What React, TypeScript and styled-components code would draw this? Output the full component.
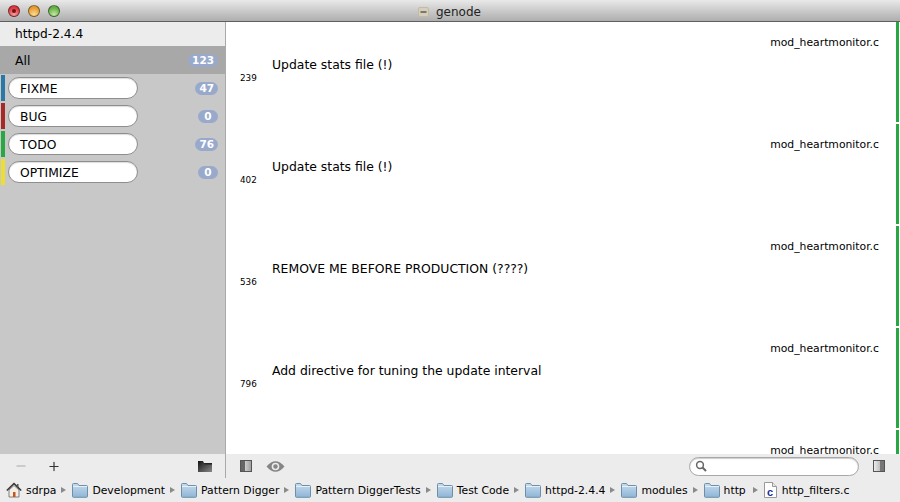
import React from "react";
import styled, { createGlobalStyle } from "styled-components";
import { FiPlus, FiMinus } from "react-icons/fi";

const GlobalStyle = createGlobalStyle`
  html, body {
    margin: 0;
    padding: 0;
    background: #ececec;
  }
  body {
    font-family: "DejaVu Sans", "Liberation Sans", sans-serif;
    color: #000;
  }
`;

const Window = styled.div`
  width: 900px;
  height: 502px;
  display: flex;
  flex-direction: column;
  overflow: hidden;
`;

const TitleBar = styled.div`
  height: 21px;
  flex: none;
  display: flex;
  align-items: center;
  background: linear-gradient(#e9e9e9, #c8c8c8 55%, #aeaeae);
  border-bottom: 1px solid #5f5f5f;
  position: relative;
`;

const Lights = styled.div`
  display: flex;
  gap: 8px;
  padding-left: 8px;
`;

const Light = styled.span<{ $color: string; $glow: string; $dot?: boolean }>`
  width: 12px;
  height: 12px;
  border-radius: 50%;
  box-sizing: border-box;
  border: 1px solid rgba(0, 0, 0, 0.45);
  background: radial-gradient(circle at 50% 85%, ${(p) => p.$glow} 0, ${(p) => p.$color} 70%);
  display: flex;
  align-items: center;
  justify-content: center;
  &::after {
    content: "";
    width: 4px;
    height: 4px;
    border-radius: 50%;
    background: ${(p) => (p.$dot ? "#7a1016" : "transparent")};
  }
`;

const WindowTitle = styled.div`
  position: absolute;
  left: 418px;
  top: 3px;
  display: flex;
  align-items: center;
  gap: 7px;
  font-size: 12px;
  line-height: 18px;
  color: #222;
`;

const Body = styled.div`
  flex: 1;
  display: flex;
  min-height: 0;
`;

const Sidebar = styled.div`
  width: 225px;
  flex: none;
  display: flex;
  flex-direction: column;
  background: #c8c8c8;
  border-right: 1px solid #a9a9a9;
`;

const ProjectName = styled.div`
  height: 24px;
  flex: none;
  background: #ececec;
  padding-left: 15px;
  font-size: 12.2px;
  line-height: 24px;
`;

const AllRow = styled.div`
  height: 28px;
  flex: none;
  display: flex;
  align-items: center;
  justify-content: space-between;
  background: #a8a8a8;
  padding: 0 7px 0 15px;
  font-size: 12.4px;
`;

const TagRow = styled.div`
  height: 28px;
  flex: none;
  display: flex;
  align-items: center;
  padding-right: 7px;
`;

const TagColor = styled.span<{ $color: string }>`
  width: 4px;
  height: 26px;
  margin-left: 1px;
  flex: none;
  background: ${(p) => p.$color};
`;

const TagPill = styled.div`
  width: 130px;
  height: 22px;
  box-sizing: border-box;
  margin-left: 3px;
  padding-left: 11px;
  border: 1px solid #8e8e8e;
  border-radius: 11px;
  background: #fff;
  box-shadow: inset 0 1px 1px #ddd;
  font-size: 12.3px;
  line-height: 22px;
`;

const Count = styled.span`
  margin-left: auto;
  height: 13px;
  min-width: 20px;
  padding: 0 4px;
  box-sizing: border-box;
  border-radius: 7px;
  background: #98a9cc;
  color: #fff;
  font-size: 10.5px;
  font-weight: bold;
  line-height: 13px;
  text-align: center;
`;

const Spacer = styled.div`
  flex: 1;
`;

const SidebarFooter = styled.div`
  height: 24px;
  flex: none;
  display: flex;
  align-items: center;
  background: #ececec;
  padding: 0 13px 0 14px;
`;

const FooterButton = styled.span<{ $muted?: boolean }>`
  width: 14px;
  height: 16px;
  margin-right: 19px;
  display: flex;
  align-items: center;
  justify-content: center;
  color: ${(p) => (p.$muted ? "#aaa" : "#333")};
`;

const Main = styled.div`
  flex: 1;
  min-width: 0;
  display: flex;
  flex-direction: column;
`;

const Entries = styled.div`
  flex: 1;
  min-height: 0;
  overflow: hidden;
  background: #fff;
`;

const Entry = styled.div`
  height: 100px;
  margin-bottom: 2px;
  padding: 14px 17px 0 14px;
  margin-right: 1px;
  border-right: 3px solid #27a843;
  display: grid;
  grid-template-columns: 32px 1fr;
  grid-template-rows: 14px 13px 24px;
  box-sizing: border-box;
`;

const FileName = styled.div`
  grid-column: 1 / 3;
  text-align: right;
  font-size: 10.8px;
  line-height: 14px;
`;

const Message = styled.div`
  grid-column: 2;
  grid-row: 2 / 4;
  padding-top: 6px;
  font-size: 12.4px;
  line-height: 18px;
  white-space: nowrap;
`;

const LineNumber = styled.div`
  grid-column: 1;
  grid-row: 3;
  padding-top: 9px;
  font-size: 8.8px;
  line-height: 12px;
`;

const MainFooter = styled.div`
  height: 24px;
  flex: none;
  display: flex;
  align-items: center;
  background: #ececec;
  padding: 0 15px 0 14px;
  gap: 14px;
`;

const SearchBox = styled.div`
  width: 170px;
  height: 19px;
  margin-left: auto;
  box-sizing: border-box;
  border: 1px solid #a8a8a8;
  border-radius: 10px;
  background: #fff;
  box-shadow: inset 0 1px 1px #ccc;
  display: flex;
  align-items: center;
  padding-left: 5px;
`;

const PathBar = styled.div`
  height: 24px;
  flex: none;
  display: flex;
  align-items: center;
  background: #ececec;
  padding-left: 6px;
  font-size: 10.8px;
  white-space: nowrap;
`;

const Crumb = styled.span<{ $gap?: number }>`
  display: flex;
  align-items: center;
  gap: ${(p) => p.$gap ?? 4}px;
`;

const Arrow = styled.span<{ $before?: number }>`
  width: 0;
  height: 0;
  margin: 0 6px 0 ${(p) => p.$before ?? 5}px;
  border-left: 5px solid #8a8a8a;
  border-top: 3.5px solid transparent;
  border-bottom: 3.5px solid transparent;
`;

const FolderIcon = () => (
  <svg width="16" height="15" viewBox="0 0 16 15">
    <defs>
      <linearGradient id="folderFill" x1="0" y1="0" x2="0" y2="1">
        <stop offset="0" stopColor="#c6dcef" />
        <stop offset="1" stopColor="#8fb5d6" />
      </linearGradient>
    </defs>
    <path
      d="M.5 13.500v-12q0-1 1-1h4l1.500 2h7.500q1 0 1 1v10q0 .8-1 .8h-13q-1 0-1-.8z"
      fill="url(#folderFill)"
      stroke="#6f8fa8"
    />
    <path d="M1 3.500h14" stroke="#e6f0f8" />
  </svg>
);

const HomeIcon = () => (
  <svg width="16" height="16" viewBox="0 0 16 16">
    <path d="M3 8v7h10V8L8 3.500z" fill="#f3efe6" stroke="#666" strokeWidth=".8" />
    <path d="M.8 8.500 8 1.500l7.200 7" fill="none" stroke="#333" strokeWidth="1.500" />
    <rect x="7" y="10" width="2.500" height="5" fill="#c2561c" />
    <rect x="11" y="2" width="1.500" height="3" fill="#555" />
  </svg>
);

const SourceFileIcon = () => (
  <svg width="13" height="16" viewBox="0 0 13 16">
    <path d="M.5.500h8l4 4v11H.5z" fill="#fff" stroke="#999" />
    <path d="M8.500.500v4h4" fill="#e8e8e8" stroke="#999" />
    <text x="3" y="13.500" fontSize="11" fontWeight="bold" fontFamily="Liberation Sans" fill="#1c2f96">
      c
    </text>
  </svg>
);

const PanelIcon = ({ side }: { side: "left" | "right" }) => (
  <svg width="12" height="12" viewBox="0 0 12 12">
    <defs>
      <linearGradient id={`panel-${side}`} x1="0" y1="0" x2="1" y2="0">
        <stop offset="0" stopColor="#f0f0f0" />
        <stop offset="1" stopColor="#9c9c9c" />
      </linearGradient>
    </defs>
    <rect x=".5" y=".5" width="11" height="11" fill={`url(#panel-${side})`} stroke="#555" />
    {side === "left" ? (
      <rect x="1" y="1" width="4" height="10" fill="#666" />
    ) : (
      <rect x="7" y="1" width="4" height="10" fill="#777" />
    )}
  </svg>
);

const EyeIcon = () => (
  <svg width="19" height="13" viewBox="0 0 19 13">
    <path d="M.5 6.500Q9.500-4 18.500 6.500 9.500 17 .5 6.500z" fill="#858585" />
    <circle cx="9.500" cy="6.500" r="3.800" fill="#ececec" />
    <circle cx="9.500" cy="6.500" r="2.200" fill="#858585" />
  </svg>
);

const OpenFolderIcon = () => (
  <svg width="14" height="11" viewBox="0 0 14 11">
    <defs>
      <linearGradient id="darkFolder" x1="0" y1="0" x2="1" y2="1">
        <stop offset="0" stopColor="#111" />
        <stop offset="1" stopColor="#888" />
      </linearGradient>
    </defs>
    <path d="M0 0h5l1 2h8v9H0z" fill="url(#darkFolder)" />
    <path d="M6 2h8v1.500H7z" fill="#222" />
  </svg>
);

const SearchGlyph = () => (
  <svg width="12" height="12" viewBox="0 0 12 12">
    <circle cx="5" cy="5" r="3.400" fill="none" stroke="#666" strokeWidth="1.500" />
    <path d="m7.500 7.500 3.500 3.500" stroke="#666" strokeWidth="2" />
  </svg>
);

const DocProxyIcon = () => (
  <svg width="11" height="10" viewBox="0 0 11 10">
    <rect x=".5" y=".5" width="10" height="9" rx="1.500" fill="#d8cfba" stroke="#c4bba6" />
    <rect x="2.500" y="4" width="6" height="2" fill="#777" />
  </svg>
);

const tags = [
  { name: "FIXME", color: "#2a78a8", count: 47 },
  { name: "BUG", color: "#a82828", count: 0 },
  { name: "TODO", color: "#27a843", count: 76 },
  { name: "OPTIMIZE", color: "#ecdf30", count: 0 },
];

const entries = [
  { line: 239, text: "Update stats file (!)" },
  { line: 402, text: "Update stats file (!)" },
  { line: 536, text: "REMOVE ME BEFORE PRODUCTION (????)" },
  { line: 796, text: "Add directive for tuning the update interval" },
  { line: 0, text: "" },
];

const crumbs = [
  "Development",
  "Pattern Digger",
  "Pattern DiggerTests",
  "Test Code",
  "httpd-2.4.4",
  "modules",
  "http",
];

const App = () => {
  return (
    <Window>
      <GlobalStyle />
      <TitleBar>
        <Lights>
          <Light $color="#d8383e" $glow="#f5a0a0" $dot />
          <Light $color="#e59a30" $glow="#fbdd90" />
          <Light $color="#62ad45" $glow="#c6eaa0" />
        </Lights>
        <WindowTitle>
          <DocProxyIcon />
          genode
        </WindowTitle>
      </TitleBar>
      <Body>
        <Sidebar>
          <ProjectName>httpd-2.4.4</ProjectName>
          <AllRow>
            All
            <Count>123</Count>
          </AllRow>
          {tags.map((tag) => (
            <TagRow key={tag.name}>
              <TagColor $color={tag.color} />
              <TagPill>{tag.name}</TagPill>
              <Count>{tag.count}</Count>
            </TagRow>
          ))}
          <Spacer />
          <SidebarFooter>
            <FooterButton $muted>
              <FiMinus size={14} />
            </FooterButton>
            <FooterButton>
              <FiPlus size={15} />
            </FooterButton>
            <Spacer />
            <OpenFolderIcon />
          </SidebarFooter>
        </Sidebar>
        <Main>
          <Entries>
            {entries.map((entry, i) => (
              <Entry key={i}>
                <FileName>mod_heartmonitor.c</FileName>
                <Message>{entry.text}</Message>
                <LineNumber>{entry.line || ""}</LineNumber>
              </Entry>
            ))}
          </Entries>
          <MainFooter>
            <PanelIcon side="left" />
            <EyeIcon />
            <SearchBox>
              <SearchGlyph />
            </SearchBox>
            <PanelIcon side="right" />
          </MainFooter>
        </Main>
      </Body>
      <PathBar>
        <Crumb>
          <HomeIcon />
          sdrpa
        </Crumb>
        {crumbs.map((name) => (
          <React.Fragment key={name}>
            <Arrow />
            <Crumb>
              <FolderIcon />
              {name}
            </Crumb>
          </React.Fragment>
        ))}
        <Arrow $before={7} />
        <Crumb $gap={5}>
          <SourceFileIcon />
          http_filters.c
        </Crumb>
      </PathBar>
    </Window>
  );
};

export default App;
